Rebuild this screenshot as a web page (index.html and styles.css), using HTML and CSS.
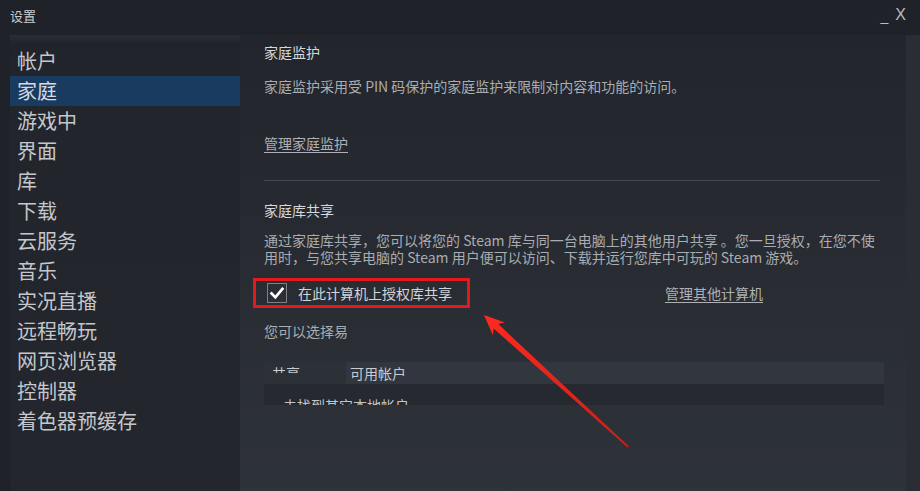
FILE: index.html
```html
<!DOCTYPE html>
<html lang="zh-CN">
<head>
<meta charset="utf-8">
<title>设置</title>
<link rel="stylesheet" href="styles.css">
</head>
<body>
<div class="window">
  <header class="titlebar">
    <span class="title">设置</span>
    <div class="controls"><span class="min">_</span><span class="close">X</span></div>
  </header>
  <div class="main">
    <nav class="sidebar">
      <div class="nav-item">帐户</div>
      <div class="nav-item active">家庭</div>
      <div class="nav-item">游戏中</div>
      <div class="nav-item">界面</div>
      <div class="nav-item">库</div>
      <div class="nav-item">下载</div>
      <div class="nav-item">云服务</div>
      <div class="nav-item">音乐</div>
      <div class="nav-item">实况直播</div>
      <div class="nav-item">远程畅玩</div>
      <div class="nav-item">网页浏览器</div>
      <div class="nav-item">控制器</div>
      <div class="nav-item">着色器预缓存</div>
    </nav>
    <section class="content">
      <h2 class="heading">家庭监护</h2>
      <p class="desc">家庭监护采用受 PIN 码保护的家庭监护来限制对内容和功能的访问。</p>
      <a class="link link-family">管理家庭监护</a>
      <div class="divider"></div>
      <h2 class="heading">家庭库共享</h2>
      <p class="desc desc-share">通过家庭库共享，您可以将您的 Steam 库与同一台电脑上的其他用户共享 。您一旦授权，在您不使<br>用时，与您共享电脑的 Steam 用户便可以访问、下载并运行您库中可玩的 Steam 游戏。</p>
      <div class="share-row">
        <label class="highlight">
          <span class="checkbox">
            <svg viewBox="0 0 20 20" width="20" height="20"><path d="M4 10.5 L8.2 14.8 L16 5.5" fill="none" stroke="#ffffff" stroke-width="3" stroke-linecap="square"/></svg>
          </span>
          <span class="check-label">在此计算机上授权库共享</span>
        </label>
        <a class="link link-other">管理其他计算机</a>
      </div>
      <p class="desc choose">您可以选择易</p>
      <div class="table">
        <div class="thead">
          <div class="th th-share"><span class="clip-top">共享</span></div>
          <div class="th th-accounts">可用帐户</div>
        </div>
        <div class="trow"><span class="row-text">未找到其它本地帐户</span></div>
      </div>
    </section>
    <div class="edge"></div>
  </div>
  <svg class="arrow" viewBox="0 0 920 491" width="920" height="491">
    <defs>
      <linearGradient id="ag" x1="484" y1="315" x2="628" y2="447" gradientUnits="userSpaceOnUse">
        <stop offset="0" stop-color="#ff2a1e"/>
        <stop offset="1" stop-color="#c8201c"/>
      </linearGradient>
    </defs>
    <polygon fill="url(#ag)" points="484,315 505,322.4 498.2,324 629,446.4 627.6,447.6 493.6,328.4 493,335.4"/>
  </svg>
</div>
</body>
</html>
```

FILE: styles.css
```css
* { box-sizing: border-box; }
html, body { margin: 0; padding: 0; }
body {
  width: 920px;
  height: 491px;
  overflow: hidden;
  background: #1e2127;
  font-family: "Noto Sans CJK SC", "Noto Sans", sans-serif;
}
.window {
  position: relative;
  width: 920px;
  height: 491px;
  display: flex;
  flex-direction: column;
  background: #1f2228;
}
.titlebar {
  height: 35px;
  display: flex;
  align-items: center;
  justify-content: space-between;
  padding: 0 14px 0 10px;
  flex: none;
}
.title {
  color: #c9ccd0;
  font-size: 13px;
  line-height: 16px;
  margin-top: -4px;
}
.controls {
  display: flex;
  align-items: center;
  gap: 7px;
  margin-top: -6px;
  color: #b9bcc0;
  font-family: "Liberation Sans", sans-serif;
}
.min { font-size: 14px; line-height: 14px; margin-top: 2px; }
.close { font-size: 16px; line-height: 16px; }
.main {
  flex: 1;
  display: flex;
  min-height: 0;
}
.sidebar {
  width: 230px;
  margin-left: 10px;
  padding-top: 11px;
  background: linear-gradient(#2a2d34 0, #20232a 9px, #22252c 60px, #23262d 100%);
  flex: none;
}
.nav-item {
  height: 30px;
  line-height: 30px;
  padding-left: 7px;
  font-size: 20px;
  color: #c4c7cb;
  white-space: nowrap;
}
.nav-item.active {
  background: #1a3b60;
  color: #d7dbe0;
}
.content {
  flex: 1;
  padding: 7px 22px 0 24px;
  background: linear-gradient(#22252b 0%, #272a31 40%, #2e3239 100%);
  position: relative;
}
.heading {
  margin: 0;
  font-size: 14px;
  font-weight: normal;
  line-height: 20px;
  color: #d6d8db;
}
.desc {
  margin: 14px 0 0;
  font-size: 14px;
  line-height: 20px;
  color: #a9adb1;
}
.link {
  display: inline-block;
  font-size: 14px;
  line-height: 20px;
  color: #adb1b5;
  text-decoration: underline;
  text-underline-offset: 3px;
}
.link-family { margin-top: 37px; }
.divider {
  height: 1px;
  background: #454950;
  margin-top: 26px;
  margin-right: 4px;
}
.divider + .heading { margin-top: 19px; }
.desc-share {
  margin-top: 12px;
  line-height: 17px;
  white-space: nowrap;
}
.share-row {
  display: flex;
  align-items: center;
  margin-top: 12px;
}
.highlight {
  display: flex;
  align-items: center;
  height: 30px;
  margin-left: -11px;
  padding: 0 15px 0 11px;
  border: 3px solid #e3191b;
}
.checkbox {
  width: 20px;
  height: 20px;
  border: 1px solid #7d8187;
  background: #2b2e34;
  display: flex;
  align-items: center;
  justify-content: center;
}
.checkbox svg { display: block; }
.check-label {
  margin-left: 11px;
  font-size: 14px;
  line-height: 20px;
  color: #d2d5d8;
}
.link-other { margin-left: 195px; }
.choose { margin-top: 13px; }
.table {
  margin-top: 21px;
  width: 620px;
}
.thead {
  display: flex;
  height: 22px;
}
.th {
  font-size: 14px;
  color: #c9ccd0;
}
.th-share {
  width: 82px;
  background: #2c3037;
  padding: 4px 0 0 8px;
}
.clip-top {
  display: block;
  height: 7px;
  overflow: hidden;
  line-height: 14px;
  padding-top: 0;
}
.th-accounts {
  flex: 1;
  background: #32363e;
  padding-left: 4px;
  line-height: 22px;
}
.trow {
  height: 21px;
  background: #26292f;
  overflow: hidden;
  padding: 14px 0 0 19px;
}
.row-text {
  display: block;
  font-size: 14px;
  line-height: 14px;
  color: #c2c5c9;
}
.edge {
  width: 14px;
  flex: none;
  background: #2a2d33;
}
.arrow {
  position: absolute;
  left: 0;
  top: 0;
  pointer-events: none;
}
```
